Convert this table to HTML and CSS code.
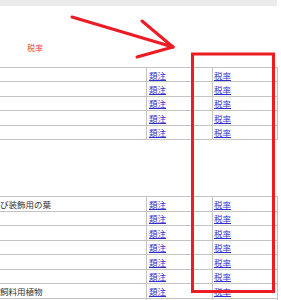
FILE: index.html
```html
<!DOCTYPE html>
<html lang="ja">
<head>
<meta charset="utf-8">
<link rel="stylesheet" href="styles.css">
</head>
<body>
<div class="page">
  <div class="topbar"></div>
  <div class="caption"><span class="caption-text">税率</span></div>
  <div class="table">
    <div class="row first"><div class="c1"></div><div class="c2"><a href="#">類注</a></div><div class="c3"><a href="#">税率</a></div></div>
    <div class="row"><div class="c1"></div><div class="c2"><a href="#">類注</a></div><div class="c3"><a href="#">税率</a></div></div>
    <div class="row"><div class="c1"></div><div class="c2"><a href="#">類注</a></div><div class="c3"><a href="#">税率</a></div></div>
    <div class="row"><div class="c1"></div><div class="c2"><a href="#">類注</a></div><div class="c3"><a href="#">税率</a></div></div>
    <div class="row"><div class="c1"></div><div class="c2"><a href="#">類注</a></div><div class="c3"><a href="#">税率</a></div></div>
    <div class="row tall"></div>
    <div class="row"><div class="c1"><span class="name">び装飾用の葉</span></div><div class="c2"><a href="#">類注</a></div><div class="c3"><a href="#">税率</a></div></div>
    <div class="row"><div class="c1"></div><div class="c2"><a href="#">類注</a></div><div class="c3"><a href="#">税率</a></div></div>
    <div class="row"><div class="c1"></div><div class="c2"><a href="#">類注</a></div><div class="c3"><a href="#">税率</a></div></div>
    <div class="row"><div class="c1"></div><div class="c2"><a href="#">類注</a></div><div class="c3"><a href="#">税率</a></div></div>
    <div class="row"><div class="c1"></div><div class="c2"><a href="#">類注</a></div><div class="c3"><a href="#">税率</a></div></div>
    <div class="row"><div class="c1"></div><div class="c2"><a href="#">類注</a></div><div class="c3"><a href="#">税率</a></div></div>
    <div class="row"><div class="c1"><span class="name">飼料用植物</span></div><div class="c2"><a href="#">類注</a></div><div class="c3"><a href="#">税率</a></div></div>
    <div class="row"><div class="c1"></div><div class="c2"></div><div class="c3"></div></div>
  </div>
  <svg class="annot" width="281" height="300" viewBox="0 0 281 300">
    <g stroke="#ec1c24" stroke-width="3" fill="none" stroke-linecap="round">
      <line x1="72" y1="17" x2="173" y2="47"/>
      <line x1="142" y1="21" x2="173" y2="47"/>
      <line x1="137" y1="57" x2="173" y2="47"/>
      <rect x="192.5" y="54" width="81" height="237.5" stroke-linecap="butt"/>
    </g>
  </svg>
</div>
</body>
</html>
```

FILE: styles.css
```css
html, body {
  margin: 0;
  padding: 0;
  background: #fff;
}
.page {
  position: relative;
  width: 281px;
  height: 300px;
  overflow: hidden;
  font-family: "Noto Sans CJK JP", "Liberation Sans", sans-serif;
  font-size: 8.5px;
  color: #333;
}
.topbar {
  width: 277px;
  height: 6px;
  background: #ebebeb;
}
.caption {
  height: 61px;
  box-sizing: border-box;
  padding: 35px 0 0 27px;
}
.caption-text {
  color: #f03a3a;
  font-size: 8px;
  line-height: 10px;
}
.table {
  width: 278px;
}
.row {
  display: grid;
  grid-template-columns: 146px 66px 66px;
  height: 14.5px;
  box-sizing: border-box;
  border-bottom: 1px solid #c4c4c4;
}
.row.first {
  border-top: 1px solid #c4c4c4;
  height: 15px;
}
.row.tall {
  display: block;
  height: 57px;
}
.c1, .c2, .c3 {
  display: flex;
  align-items: center;
  overflow: hidden;
  white-space: nowrap;
}
.c2 {
  border-left: 1px solid #c4c4c4;
  padding-left: 2px;
}
.c3 {
  border-left: 1px solid #c4c4c4;
  border-right: 1px solid #c4c4c4;
  padding-left: 1px;
}
.name {
  color: #333;
}
a {
  color: #3030cc;
  text-decoration: underline;
}
.annot {
  position: absolute;
  left: 0;
  top: 0;
  pointer-events: none;
}
```
